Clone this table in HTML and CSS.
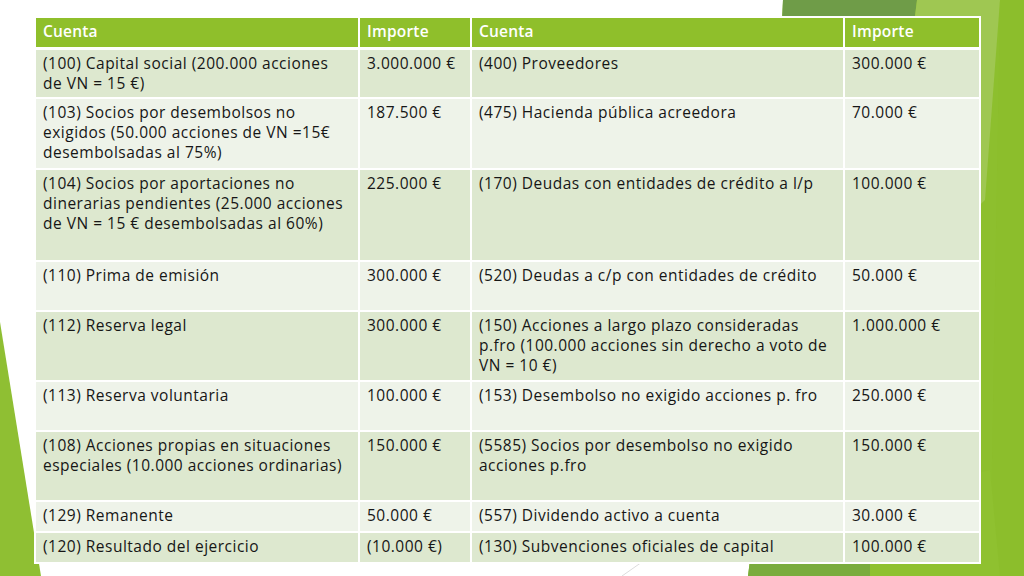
FILE: index.html
```html
<!DOCTYPE html>
<html lang="es">
<head>
<meta charset="utf-8">
<title>Cuentas</title>
<link rel="stylesheet" href="styles.css">
</head>
<body>
<div class="slide">
  <svg class="deco" width="1024" height="576" viewBox="0 0 1024 576" aria-hidden="true">
    <polygon points="783,0 1024,0 1024,576 748,576 760,480" fill="#8dbf2e"/>
    <polygon points="783,0 917,0 880,300 760,480" fill="#6f9c48"/>
    <polygon points="917,0 1000,0 985,200 880,300" fill="#9fc752"/>
    <polygon points="1000,0 1024,0 1024,576 990,576" fill="#8cbe2c"/>
    <polygon points="748,576 760,480 870,500 870,576" fill="#7aac3d"/>
    <polygon points="870,576 870,500 990,470 1000,576" fill="#8fc130"/>
    <polygon points="0,322 0,576 41,576" fill="#8fbf33"/>
    <line x1="622" y1="576" x2="642" y2="562" stroke="#dcdcdc" stroke-width="1"/>
  </svg>
  <table class="accounts">
    <colgroup>
      <col class="c1"><col class="c2"><col class="c3"><col class="c4">
    </colgroup>
    <thead>
      <tr class="h"><th>Cuenta</th><th>Importe</th><th>Cuenta</th><th>Importe</th></tr>
    </thead>
    <tbody>
      <tr class="r1"><td>(100) Capital social (200.000 acciones de VN = 15 €)</td><td>3.000.000 €</td><td>(400) Proveedores</td><td>300.000 €</td></tr>
      <tr class="r2"><td>(103) Socios por desembolsos no exigidos (50.000 acciones de VN =15€ desembolsadas al 75%)</td><td>187.500 €</td><td>(475) Hacienda pública acreedora</td><td>70.000 €</td></tr>
      <tr class="r3"><td>(104) Socios por aportaciones no dinerarias pendientes (25.000 acciones de VN = 15 € desembolsadas al 60%)</td><td>225.000 €</td><td>(170) Deudas con entidades de crédito a l/p</td><td>100.000 €</td></tr>
      <tr class="r4"><td>(110) Prima de emisión</td><td>300.000 €</td><td>(520) Deudas a c/p con entidades de crédito</td><td>50.000 €</td></tr>
      <tr class="r5"><td>(112) Reserva legal</td><td>300.000 €</td><td>(150) Acciones a largo plazo consideradas p.fro (100.000 acciones sin derecho a voto de VN = 10 €)</td><td>1.000.000 €</td></tr>
      <tr class="r6"><td>(113) Reserva voluntaria</td><td>100.000 €</td><td>(153) Desembolso no exigido acciones p. fro</td><td>250.000 €</td></tr>
      <tr class="r7"><td>(108) Acciones propias en situaciones especiales (10.000 acciones ordinarias)</td><td>150.000 €</td><td>(5585) Socios por desembolso no exigido acciones p.fro</td><td>150.000 €</td></tr>
      <tr class="r8"><td>(129) Remanente</td><td>50.000 €</td><td>(557) Dividendo activo a cuenta</td><td>30.000 €</td></tr>
      <tr class="r9"><td>(120) Resultado del ejercicio</td><td>(10.000 €)</td><td>(130) Subvenciones oficiales de capital</td><td>100.000 €</td></tr>
    </tbody>
  </table>
</div>
</body>
</html>
```
FILE: styles.css
```css
* { box-sizing: border-box; }
html, body { margin: 0; padding: 0; background: #ffffff; }
.slide {
  position: relative;
  width: 1024px;
  height: 576px;
  overflow: hidden;
  padding: 16px 0 0 34px;
  font-family: "Open Sans", Lato, sans-serif;
  color: #161616;
}
.deco { position: absolute; left: 0; top: 0; }
.accounts {
  position: relative;
  border-collapse: collapse;
  table-layout: fixed;
  width: 945px;
  font-size: 15.5px;
  letter-spacing: 0.5px;
  line-height: 20px;
}
.c1 { width: 324px; }
.c2 { width: 112px; }
.c3 { width: 373px; }
.c4 { width: 136px; }
.accounts th, .accounts td {
  border: 2px solid #ffffff;
  text-align: left;
  vertical-align: top;
  padding: 3px 6px 3px 7px;
}
.accounts th {
  background: #8fbf2b;
  color: #ffffff;
  font-weight: 600;
  letter-spacing: 0.2px;
  padding-top: 3px;
  border-bottom-width: 3px;
}
.accounts tbody tr:nth-child(odd) td { background: #dde8cf; }
.accounts tbody tr:nth-child(even) td { background: #eef3e9; }
.h { height: 31px; }
.r1 { height: 50px; }
.r2 { height: 71px; }
.r3 { height: 92px; }
.r4 { height: 50px; }
.r5 { height: 70px; }
.r6 { height: 50px; }
.r7 { height: 70px; }
.r8 { height: 31px; }
.r9 { height: 31px; }
```
